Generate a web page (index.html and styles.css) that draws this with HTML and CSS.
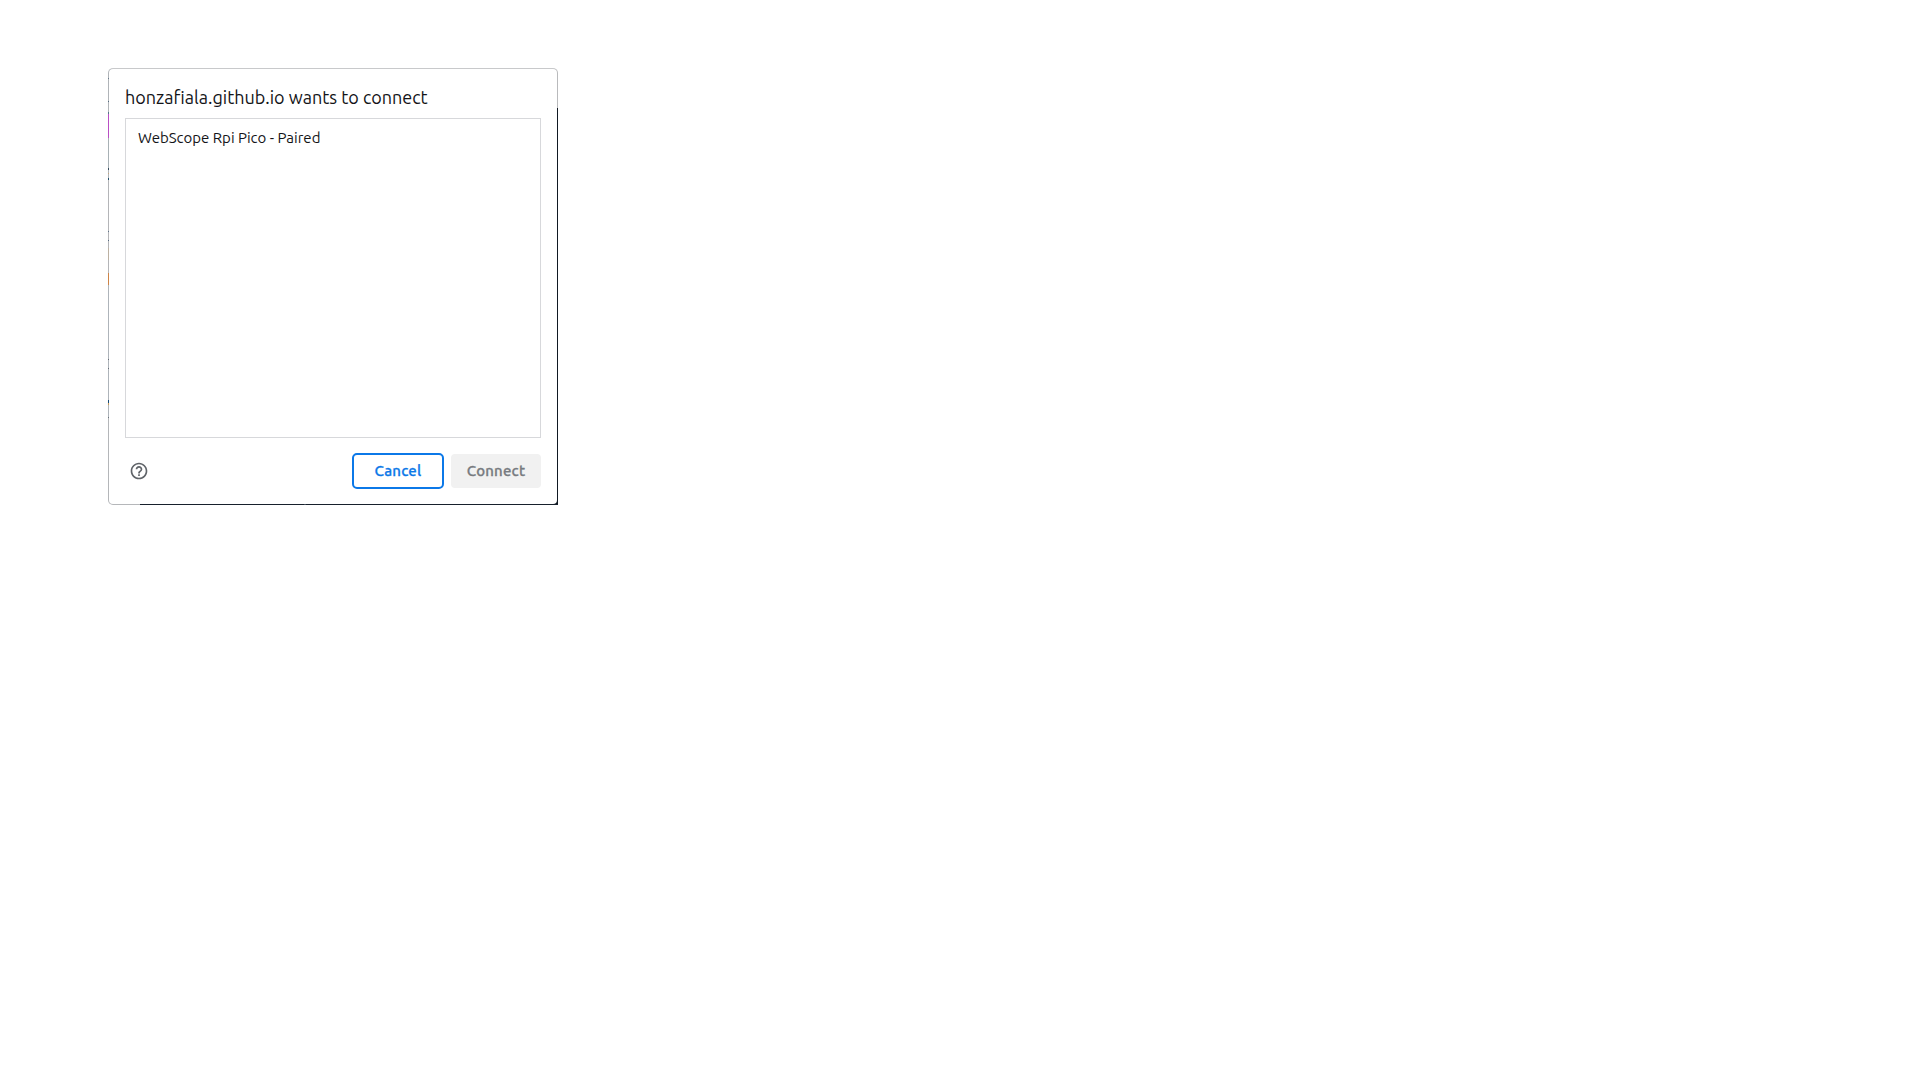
FILE: index.html
```html
<!DOCTYPE html>
<html lang="en">
<head>
<meta charset="utf-8">
<title>Connect device</title>
<link rel="stylesheet" href="styles.css">
</head>
<body>
<section class="frame" role="dialog" aria-labelledby="title">
  <div class="dialog">
    <h1 class="title" id="title"><span>honzafiala.github.io wants to connect</span></h1>
    <ul class="devices">
      <li class="device"><span>WebScope Rpi Pico - Paired</span></li>
    </ul>
    <footer class="actions">
      <svg class="help" viewBox="0 0 24 24" aria-label="Help"><path d="M11 18h2v-2h-2v2zm1-16C6.48 2 2 6.48 2 12s4.480 10 10 10 10-4.480 10-10S17.520 2 12 2zm0 18c-4.410 0-8-3.590-8-8s3.590-8 8-8 8 3.590 8 8-3.590 8-8 8zm0-14c-2.210 0-4 1.790-4 4h2c0-1.100.9-2 2-2s2 .9 2 2c0 2-3 1.750-3 5h2c0-2.250 3-2.500 3-5 0-2.210-1.790-4-4-4z"/></svg>
      <button class="button cancel">Cancel</button>
      <button class="button connect" disabled>Connect</button>
    </footer>
  </div>
</section>
</body>
</html>
```
FILE: styles.css
```css
* { box-sizing: border-box; }

body {
  margin: 0;
  padding: 68px 108px;
  background: #fff;
  color: #131417;
  font-family: Ubuntu, "Noto Sans", sans-serif;
}

.frame {
  width: 450px;
  height: 437px;
  padding: 1px;
  border-radius: 5px 5px 0 5px;
  background:
    linear-gradient(#c8c9cb, #c8c9cb) 0 0 / 100% 1px no-repeat,
    linear-gradient(90deg, #b5b7ba 32px, #17202c 32px 196px, #3b4652 196px 198px, #17202c 198px) 0 100% / 100% 1px no-repeat,
    linear-gradient(#b9babc 40px, #111923 40px) 100% 0 / 5px 100% no-repeat,
    linear-gradient(
      #b0b4b8 10px, #66788a 10px 11px, #b0b4b8 11px 33px, #536b80 33px 34px,
      #b0b4b8 34px 44px, #54788a 44px 46px, #b94fc5 46px 70px,
      #a8b1b5 70px 100px, #34495c 100px 102px, #b0b4b8 102px 105px,
      #c5a77f 105px 106px, #b0b4b8 106px 110px, #24506b 110px 112px,
      #b4b5b8 112px 163px, #5f748b 163px 164px, #b4b5b8 164px 172px,
      #536981 172px 173px, #b4b5b8 173px 180px, #bcb1a2 180px 192px,
      #b4b5b8 192px 205px, #ce8447 205px 217px, #aeb4ba 217px 291px,
      #656c76 291px 292px, #aeb4ba 292px 300px, #656c76 300px 301px,
      #aeb4ba 301px 332px, #164b76 332px 335px, #c59a58 335px 337px,
      #aeb4ba 337px 349px, #66717a 349px 350px, #b4b6b9 350px
    ) 0 0 / 5px 100% no-repeat;
}

.dialog {
  display: flex;
  flex-direction: column;
  height: 100%;
  padding: 16px 16px 15px;
  border-radius: 4px;
  background: #fff;
}

.title {
  height: 33px;
  margin: 0;
  font-size: 18px;
  font-weight: 400;
  line-height: 25px;
  white-space: nowrap;
}

.devices {
  height: 320px;
  margin: 0;
  padding: 9px 12px;
  border: 1px solid #d7d8db;
  list-style: none;
}

.device {
  font-size: 15px;
  line-height: 20px;
  white-space: nowrap;
}

.actions {
  display: flex;
  align-items: center;
  height: 36px;
  margin-top: 15px;
}

.help {
  width: 20px;
  height: 20px;
  margin: 0 auto 0 4px;
  fill: #5f6368;
}

.button {
  padding: 0;
  border: 0;
  border-radius: 4px;
  font: 500 15px/20px Ubuntu, "Noto Sans", sans-serif;
  letter-spacing: 0.2px;
  -webkit-text-stroke: 0.3px currentColor;
}

.cancel {
  width: 92px;
  height: 36px;
  border: 2px solid #0b78e8;
  border-radius: 5px;
  background: #fff;
  color: #0b78e8;
}

.connect {
  width: 90px;
  height: 34px;
  margin-left: 7px;
  background: #f1f1f1;
  color: #777b80;
}
```
